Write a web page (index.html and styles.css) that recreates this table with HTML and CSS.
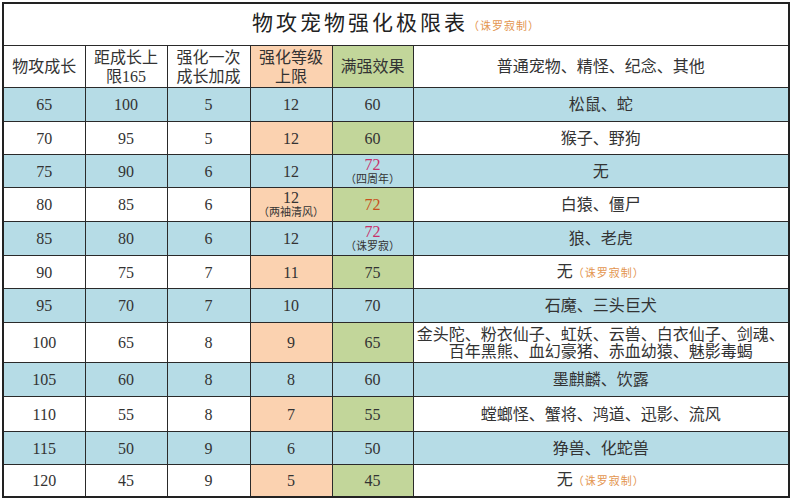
FILE: index.html
```html
<!DOCTYPE html>
<html lang="zh">
<head>
<meta charset="utf-8">
<title>物攻宠物强化极限表</title>
<link rel="stylesheet" href="styles.css">
</head>
<body>
<table class="sheet">
  <colgroup>
    <col class="c1"><col class="c2"><col class="c3"><col class="c4"><col class="c5"><col class="c6">
  </colgroup>
  <tr class="title-row">
    <td colspan="6" class="title"><span class="title-text">物攻宠物强化极限表</span><span class="author">（诛罗寂制）</span></td>
  </tr>
  <tr class="head-row">
    <td>物攻成长</td>
    <td>距成长上<br>限165</td>
    <td>强化一次<br>成长加成</td>
    <td class="orange">强化等级<br>上限</td>
    <td class="green">满强效果</td>
    <td>普通宠物、精怪、纪念、其他</td>
  </tr>
  <tr class="blue h34"><td>65</td><td>100</td><td>5</td><td>12</td><td>60</td><td>松鼠、蛇</td></tr>
  <tr class="white h33"><td>70</td><td>95</td><td>5</td><td class="orange">12</td><td class="green">60</td><td>猴子、野狗</td></tr>
  <tr class="blue h33"><td>75</td><td>90</td><td>6</td><td>12</td><td><span class="big pink">72</span><span class="note">（四周年）</span></td><td>无</td></tr>
  <tr class="white h34"><td>80</td><td>85</td><td>6</td><td class="orange"><span class="big">12</span><span class="note">（两袖清风）</span></td><td class="green"><span class="red">72</span></td><td>白猿、僵尸</td></tr>
  <tr class="blue h34"><td>85</td><td>80</td><td>6</td><td>12</td><td><span class="big pink">72</span><span class="note">（诛罗寂）</span></td><td>狼、老虎</td></tr>
  <tr class="white h33"><td>90</td><td>75</td><td>7</td><td class="orange">11</td><td class="green">75</td><td>无<span class="author">（诛罗寂制）</span></td></tr>
  <tr class="blue h34"><td>95</td><td>70</td><td>7</td><td>10</td><td>70</td><td>石魔、三头巨犬</td></tr>
  <tr class="white h40"><td>100</td><td>65</td><td>8</td><td class="orange">9</td><td class="green">65</td><td class="multi">金头陀、粉衣仙子、虹妖、云兽、白衣仙子、剑魂、<br>百年黑熊、血幻豪猪、赤血幼猿、魅影毒蝎</td></tr>
  <tr class="blue h34"><td>105</td><td>60</td><td>8</td><td>8</td><td>60</td><td>墨麒麟、饮露</td></tr>
  <tr class="white h35"><td>110</td><td>55</td><td>8</td><td class="orange">7</td><td class="green">55</td><td>螳螂怪、蟹将、鸿道、迅影、流风</td></tr>
  <tr class="blue h33"><td>115</td><td>50</td><td>9</td><td>6</td><td>50</td><td>狰兽、化蛇兽</td></tr>
  <tr class="white h32"><td>120</td><td>45</td><td>9</td><td class="orange">5</td><td class="green">45</td><td>无<span class="author">（诛罗寂制）</span></td></tr>
</table>
</body>
</html>
```
FILE: styles.css
```css
html, body {
  margin: 0;
  padding: 0;
  background: #ffffff;
}
body {
  padding: 2px 0 0 2px;
}
.sheet {
  border-collapse: collapse;
  table-layout: fixed;
  width: 786px;
  font-family: "Liberation Serif", "Noto Sans CJK SC", serif;
  font-size: 16px;
  color: #333333;
  border: 2px solid #222222;
}
.c1 { width: 82px; }
.c2 { width: 82px; }
.c3 { width: 83px; }
.c4 { width: 82px; }
.c5 { width: 81px; }
.c6 { width: 376px; }
.sheet td {
  border: 1px solid #2a2a2a;
  text-align: center;
  vertical-align: middle;
  padding: 0;
  line-height: 17px;
}
.title-row td { height: 41px; }
.head-row td { height: 41px; line-height: 19px; background: #ffffff; }
.title {
  background: #ffffff;
}
.title-text {
  font-size: 21px;
  letter-spacing: 3px;
  color: #222222;
}
.author {
  font-size: 11px;
  color: #e3954f;
  letter-spacing: 1px;
}
.blue td { background: #b6dce6; }
.white td { background: #ffffff; }
.sheet td.orange { background: #fbd2b0; }
.sheet td.green { background: #c2d69a; }
.h32 td { height: 31px; }
.h33 td { height: 32px; }
.h34 td { height: 33px; }
.h35 td { height: 34px; }
.h40 td { height: 39px; }
.big {
  display: block;
  line-height: 16px;
}
.note {
  display: block;
  font-size: 11px;
  line-height: 13px;
  color: #333333;
}
.pink { color: #c8306a; }
.red { color: #c8501e; }
.multi { line-height: 18px; }
```
